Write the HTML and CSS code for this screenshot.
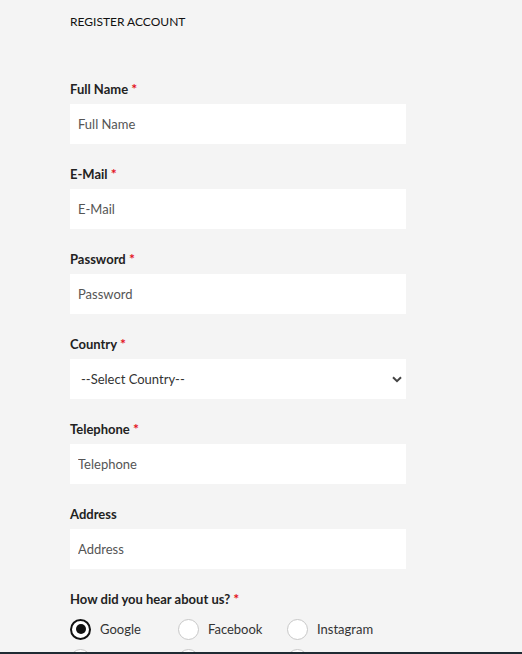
FILE: index.html
```html
<!DOCTYPE html>
<html>
<head>
<meta charset="utf-8">
<link rel="stylesheet" href="styles.css">
</head>
<body>
<div class="page">
  <h1 class="title">REGISTER ACCOUNT</h1>
  <form class="form">
    <div class="group">
      <label class="label">Full Name <span class="req">*</span></label>
      <input class="field" type="text" placeholder="Full Name">
    </div>
    <div class="group">
      <label class="label">E-Mail <span class="req">*</span></label>
      <input class="field" type="text" placeholder="E-Mail">
    </div>
    <div class="group">
      <label class="label">Password <span class="req">*</span></label>
      <input class="field" type="text" placeholder="Password">
    </div>
    <div class="group">
      <label class="label">Country <span class="req">*</span></label>
      <div class="select">
        <span class="select-text">--Select Country--</span>
        <svg class="chev" width="10" height="7" viewBox="0 0 10 7"><path d="M1 1.2 L5 5.2 L9 1.2" fill="none" stroke="#444" stroke-width="2"/></svg>
      </div>
    </div>
    <div class="group">
      <label class="label">Telephone <span class="req">*</span></label>
      <input class="field" type="text" placeholder="Telephone">
    </div>
    <div class="group">
      <label class="label">Address</label>
      <input class="field" type="text" placeholder="Address">
    </div>
    <div class="group">
      <label class="label">How did you hear about us? <span class="req">*</span></label>
      <div class="radios">
        <div class="radio-item"><span class="radio checked"></span><span>Google</span></div>
        <div class="radio-item"><span class="radio"></span><span>Facebook</span></div>
        <div class="radio-item"><span class="radio"></span><span>Instagram</span></div>
        <div class="radio-item"><span class="radio"></span><span>Twitter</span></div>
        <div class="radio-item"><span class="radio"></span><span>Friend</span></div>
        <div class="radio-item"><span class="radio"></span><span>Other</span></div>
      </div>
    </div>
  </form>
</div>
<div class="bottom-bar"></div>
</body>
</html>
```
FILE: styles.css
```css
html, body {
  margin: 0;
  padding: 0;
  background: #f4f4f4;
  font-family: Lato, "Open Sans", sans-serif;
  color: #222;
}
.page {
  padding: 12px 0 0 70px;
  width: 336px;
}
.title {
  margin: 0;
  font-size: 12px;
  font-weight: 400;
  line-height: 20px;
  color: #111;
}
.form {
  margin-top: 47px;
  display: flex;
  flex-direction: column;
  gap: 20px;
}
.group {
  display: flex;
  flex-direction: column;
  gap: 5px;
}
.label {
  font-size: 13px;
  font-weight: 700;
  line-height: 20px;
  color: #222;
}
.req {
  color: #e3111b;
  font-size: 14px;
}
.field {
  box-sizing: border-box;
  height: 40px;
  width: 336px;
  border: none;
  background: #fff;
  padding: 0 8px 1px;
  font-family: inherit;
  font-size: 13px;
  color: #333;
  outline: none;
}
.field::placeholder {
  color: #555;
}
.select {
  box-sizing: border-box;
  height: 40px;
  background: #fff;
  display: flex;
  align-items: center;
  justify-content: space-between;
  padding: 0 4px 1px 11px;
  font-size: 13px;
  color: #333;
}
.chev {
  display: block;
  margin-top: 1px;
}
.radios {
  margin-top: 5px;
  display: grid;
  grid-template-columns: 108px 109px 108px;
  row-gap: 10px;
}
.radio-item {
  display: flex;
  align-items: center;
  gap: 9px;
  font-size: 13px;
  color: #333;
  height: 20px;
}
.radio {
  box-sizing: border-box;
  width: 21px;
  height: 21px;
  border-radius: 50%;
  border: 1px solid #c8c8c8;
  background: #fff;
  flex: none;
}
.radio.checked {
  border: 2px solid #111;
  position: relative;
}
.radio.checked::after {
  content: "";
  position: absolute;
  left: 3.5px;
  top: 3.5px;
  width: 10px;
  height: 10px;
  border-radius: 50%;
  background: #111;
}
.bottom-bar {
  position: fixed;
  left: 0;
  right: 0;
  bottom: 0;
  height: 2px;
  background: #1f2b33;
}
```
